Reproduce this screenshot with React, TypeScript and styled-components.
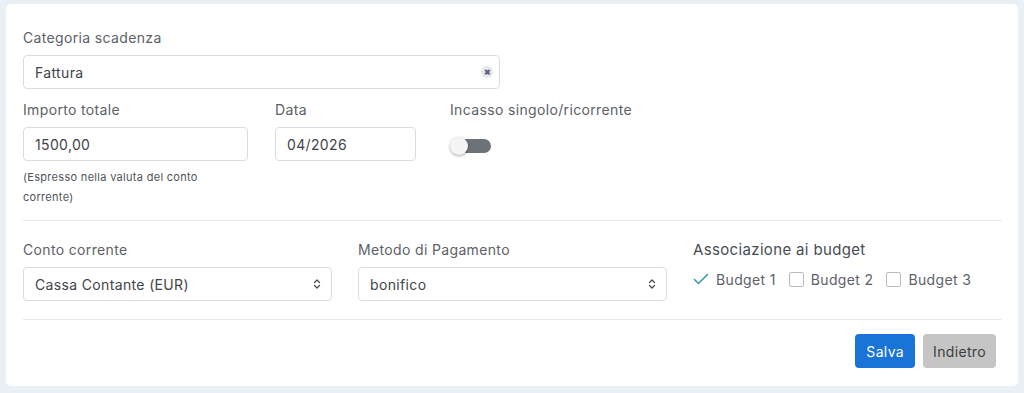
import React from "react";
import styled, { createGlobalStyle } from "styled-components";

const Global = createGlobalStyle`
  html, body { margin: 0; padding: 0; background: #e9eff5; }
  body { font-family: "Inter", "Noto Sans", sans-serif; }
  * { box-sizing: border-box; }
`;

const Page = styled.div`
  padding: 4px 6px 7px 6px;
  width: 1024px;
  height: 393px;
`;

const Card = styled.div`
  background: #fff;
  border-radius: 5px;
  height: 382px;
  padding: 24px 16px 0 17px;
  display: flex;
  flex-direction: column;
  letter-spacing: 0.35px;
`;

const Row = styled.div<{ $gap?: number }>`
  display: flex;
  align-items: flex-start;
  gap: ${(p) => p.$gap ?? 26}px;
`;

const Field = styled.div<{ $w?: number }>`
  display: flex;
  flex-direction: column;
  width: ${(p) => (p.$w ? `${p.$w}px` : "auto")};
  flex-shrink: 0;
`;

const Label = styled.label<{ $big?: boolean }>`
  font-size: ${(p) => (p.$big ? "15px" : "14px")};
  color: ${(p) => (p.$big ? "#474d55" : "#5c6168")};
  line-height: 20px;
  height: 20px;
  margin-bottom: ${(p) => (p.$big ? "4px" : "7px")};
  white-space: nowrap;
`;

const Box = styled.div`
  height: 34px;
  border: 1px solid #d9dde2;
  border-radius: 4px;
  display: flex;
  align-items: center;
  padding: 0 10px 0 11px;
  font-size: 14px;
  color: #3f444a;
  justify-content: space-between;
`;

const Clear = styled.span`
  width: 12px;
  height: 12px;
  border-radius: 50%;
  background: #e6e8ea;
  color: #5f6770;
  font-size: 8px;
  display: flex;
  align-items: center;
  justify-content: center;
  font-weight: 700;
  margin-right: -4px;
  letter-spacing: 0;
`;

const Help = styled.div`
  font-size: 11px;
  line-height: 20px;
  color: #4f545a;
  margin-top: 6px;
  letter-spacing: 0.3px;
`;

const Toggle = styled.div`
  position: relative;
  width: 38px;
  height: 14px;
  margin-top: 12px;
  margin-left: 3px;
  background: #6c7278;
  border-radius: 7px;
`;

const Knob = styled.span`
  position: absolute;
  left: -3px;
  top: -2px;
  width: 18px;
  height: 18px;
  border-radius: 50%;
  background: #f4f4f4;
  box-shadow: 0 1px 3px rgba(0, 0, 0, 0.35);
`;

const Divider = styled.hr`
  border: 0;
  border-top: 1px solid #e8e9eb;
  margin: 0;
`;

const Chevron = () => (
  <svg width="8" height="12" viewBox="0 0 8 12" fill="none" stroke="#4a4f55" strokeWidth="1.3" strokeLinecap="round" strokeLinejoin="round">
    <path d="M1.5 4.5 L4 2 L6.5 4.5" />
    <path d="M1.5 7.5 L4 10 L6.5 7.5" />
  </svg>
);

const Checks = styled.div`
  display: flex;
  align-items: center;
  gap: 13px;
  height: 30px;
`;

const Check = styled.div`
  display: flex;
  align-items: center;
  gap: 7px;
  font-size: 14px;
  color: #5c6168;
`;

const Square = styled.span`
  width: 15px;
  height: 15px;
  border: 1px solid #b9bdc2;
  border-radius: 2px;
`;

const Footer = styled.div`
  display: flex;
  justify-content: flex-end;
  gap: 8px;
  padding: 14px 6px 0 0;
`;

const Button = styled.button<{ $primary?: boolean }>`
  height: 34px;
  border: 0;
  border-radius: 4px;
  font-family: inherit;
  font-size: 14px;
  letter-spacing: 0.35px;
  padding: 0 ${(p) => (p.$primary ? "11px" : "10px")};
  background: ${(p) => (p.$primary ? "#1a73d6" : "#c5c5c5")};
  color: ${(p) => (p.$primary ? "#fff" : "#3a3d40")};
`;

export default function App() {
  return (
    <>
      <Global />
      <Page>
        <Card>
          <Field $w={477}>
            <Label>Categoria scadenza</Label>
            <Box>
              <span>Fattura</span>
              <Clear>✖</Clear>
            </Box>
          </Field>
          <Row $gap={0} style={{ marginTop: 11 }}>
            <Field $w={225}>
              <Label>Importo totale</Label>
              <Box>1500,00</Box>
              <Help>
                (Espresso nella valuta del conto
                <br />
                corrente)
              </Help>
            </Field>
            <Field $w={141} style={{ marginLeft: 27 }}>
              <Label>Data</Label>
              <Box>04/2026</Box>
            </Field>
            <Field style={{ marginLeft: 34 }}>
              <Label>Incasso singolo/ricorrente</Label>
              <Toggle>
                <Knob />
              </Toggle>
            </Field>
          </Row>
          <div style={{ height: 13 }} />
          <Divider />
          <Row style={{ marginTop: 19, marginBottom: 18 }}>
            <Field $w={309}>
              <Label>Conto corrente</Label>
              <Box>
                <span>Cassa Contante (EUR)</span>
                <Chevron />
              </Box>
            </Field>
            <Field $w={309}>
              <Label>Metodo di Pagamento</Label>
              <Box>
                <span>bonifico</span>
                <Chevron />
              </Box>
            </Field>
            <Field $w={309}>
              <Label $big>Associazione ai budget</Label>
              <Checks>
                <Check>
                  <svg width="16" height="14" viewBox="0 0 16 14" fill="none" stroke="#3a9aa5" strokeWidth="1.6" strokeLinecap="round" strokeLinejoin="round">
                    <path d="M1.5 7.5 L5.5 11.5 L14.5 2.5" />
                  </svg>
                  Budget 1
                </Check>
                <Check>
                  <Square />
                  Budget 2
                </Check>
                <Check>
                  <Square />
                  Budget 3
                </Check>
              </Checks>
            </Field>
          </Row>
          <Divider />
          <Footer>
            <Button $primary>Salva</Button>
            <Button>Indietro</Button>
          </Footer>
        </Card>
      </Page>
    </>
  );
}
